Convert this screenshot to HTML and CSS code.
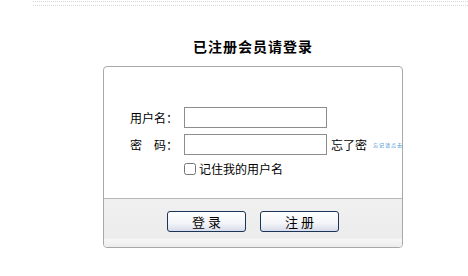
FILE: index.html
```html
<!doctype html>
<html lang="zh-CN">
<head>
    <meta charset="UTF-8">
    <title>会员登录</title>
    <link rel="stylesheet" href="styles.css">
</head>
<body>
    <div class="top-line"></div>
    <div class="login-wrap">
        <h2 class="login-title">已注册会员请登录</h2>
        <div class="login-box">
            <div class="login-form">
                <div class="form-row">
                    <label class="form-label">用户名：</label>
                    <input class="form-input" type="text">
                </div>
                <div class="form-row">
                    <label class="form-label">密　码：</label>
                    <input class="form-input" type="password">
                    <a class="forget" href="#">忘了密</a>
                    <span class="tip">忘记请点击</span>
                </div>
                <div class="form-row remember">
                    <input class="check" type="checkbox">
                    <span>记住我的用户名</span>
                </div>
            </div>
            <div class="login-foot">
                <button class="btn">登 录</button>
                <button class="btn">注 册</button>
            </div>
        </div>
    </div>
</body>
</html>
```

FILE: styles.css
```css
html,body{
    margin: 0;
    padding: 0;
    background: #fff;
    font-family: "Noto Sans CJK SC", "Liberation Sans", sans-serif;
    font-size: 12px;
    color: #000;
}
.top-line{
    margin-left: 33px;
    height: 3px;
    border-top: 1px dotted #d8d8d8;
    border-bottom: 1px dotted #d8d8d8;
    margin-top: 1px;
}
.login-wrap{
    margin-left: 33px;
    width: 440px;
}
.login-title{
    margin: 0;
    padding-top: 30px;
    height: 30px;
    line-height: 20px;
    text-align: center;
    font-size: 14px;
    font-weight: bold;
    letter-spacing: 1px;
}
.login-box{
    width: 298px;
    margin: 0 auto;
    border: 1px solid #a8a8a8;
    border-radius: 4px;
}
.login-form{
    height: 131px;
    padding-top: 40px;
    box-sizing: border-box;
    padding-left: 26px;
}
.form-row{
    display: flex;
    align-items: center;
    height: 21px;
    margin-bottom: 6px;
    white-space: nowrap;
}
.form-label{
    flex-shrink: 0;
    width: 54px;
    line-height: 21px;
}
.form-input{
    flex-shrink: 0;
    width: 143px;
    height: 21px;
    box-sizing: border-box;
    margin: 0;
    border: 1px solid #8d8d8d;
    background: #fff;
}
.forget{
    flex-shrink: 0;
    margin-left: 4px;
    color: #000;
    text-decoration: none;
    font-size: 12px;
}
.tip{
    flex-shrink: 0;
    margin-left: 6px;
    font-size: 5px;
    letter-spacing: 1px;
    color: #3b8fd0;
}
.remember{
    padding-left: 54px;
    height: 15px;
}
.check{
    width: 12px;
    height: 12px;
    margin: 0 3px 0 0;
}
.login-foot{
    height: 49px;
    border-top: 1px solid #b8b8b8;
    border-radius: 0 0 3px 3px;
    background: linear-gradient(#f0f0f0, #ececec 80%, #f6f6f6 85%, #ececec);
    display: flex;
    justify-content: center;
    gap: 14px;
    padding-top: 12px;
    box-sizing: border-box;
}
.btn{
    width: 79px;
    height: 21px;
    padding: 0;
    border: 1px solid #1c3458;
    border-radius: 3px;
    background: linear-gradient(#ffffff, #f3f4f8 60%, #d7dcea);
    font-family: "Noto Sans CJK SC", sans-serif;
    font-size: 13px;
    line-height: 19px;
    color: #000;
}
```
